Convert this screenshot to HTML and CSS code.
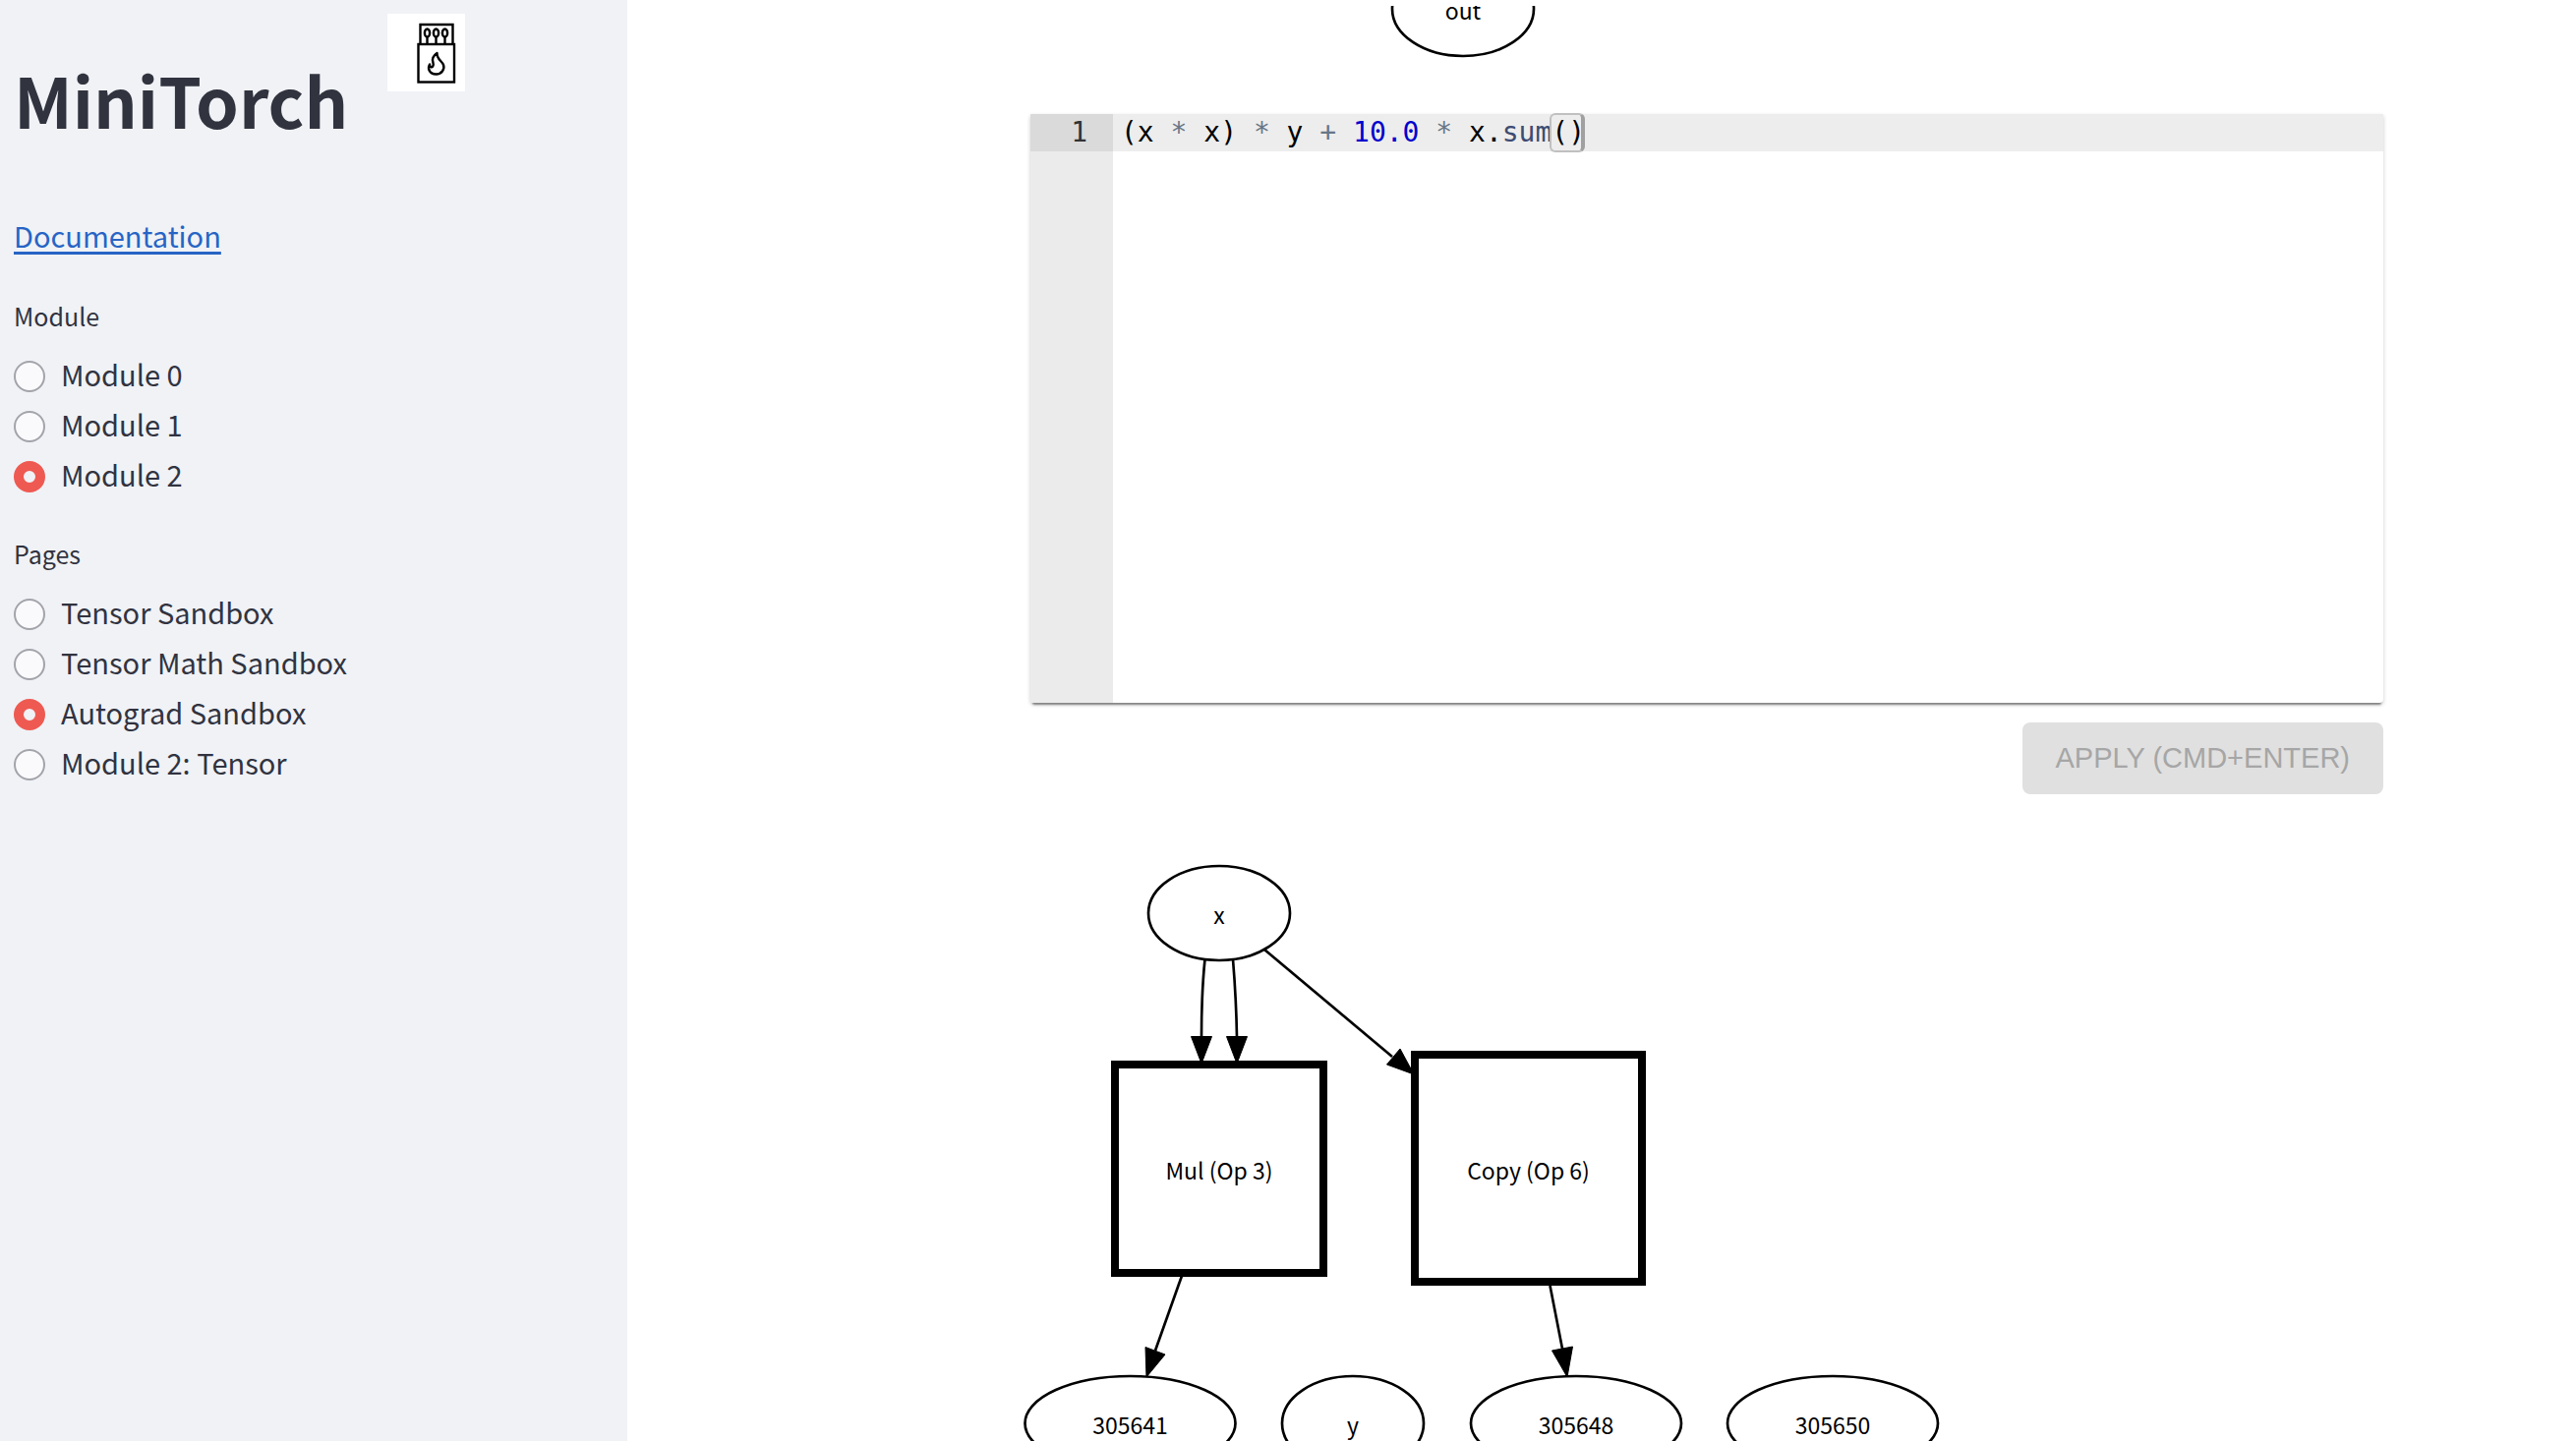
FILE: index.html
```html
<!DOCTYPE html>
<html lang="en">
<head>
<meta charset="utf-8">
<title>MiniTorch</title>
<link rel="stylesheet" href="styles.css">
</head>
<body>
<div class="app">
  <aside class="sidebar">
    <header class="brand">
      <h1 class="brand-title">MiniTorch</h1>
      <svg class="brand-logo" viewBox="0 0 79 79" role="img" aria-label="Matchbox">
        <rect width="79" height="79" fill="#fff"/>
        <g fill="none" stroke="#000" stroke-width="2.400">
          <path d="M33.500 31V11H66.500V31"/>
          <rect x="31.500" y="31" width="36.500" height="38.500"/>
          <ellipse cx="40.500" cy="19.500" rx="2.600" ry="4"/>
          <ellipse cx="49.500" cy="19.500" rx="2.600" ry="4"/>
          <ellipse cx="58.500" cy="19.500" rx="2.600" ry="4"/>
          <path d="M40.500 23.500V31M49.500 23.500V31M58.500 23.500V31"/>
          <path stroke-linejoin="round" d="M50.500 40C46 43 45 46 46.500 50C47.500 53 45.500 55 44 54C43 53.500 43 52 43 51.500C40.500 56 43 61.500 49.500 61.500C55.500 61.500 58.500 56 57 52C55.500 48 50 46 50.500 40Z"/>
        </g>
      </svg>
    </header>
    <a class="doc-link" href="#docs">Documentation</a>
    <fieldset class="radio-group">
      <legend class="radio-legend">Module</legend>
      <label class="radio"><input type="radio" name="module"><span>Module 0</span></label>
      <label class="radio"><input type="radio" name="module"><span>Module 1</span></label>
      <label class="radio"><input type="radio" name="module" checked><span>Module 2</span></label>
    </fieldset>
    <fieldset class="radio-group">
      <legend class="radio-legend">Pages</legend>
      <label class="radio"><input type="radio" name="page"><span>Tensor Sandbox</span></label>
      <label class="radio"><input type="radio" name="page"><span>Tensor Math Sandbox</span></label>
      <label class="radio"><input type="radio" name="page" checked><span>Autograd Sandbox</span></label>
      <label class="radio"><input type="radio" name="page"><span>Module 2: Tensor</span></label>
    </fieldset>
  </aside>
  <main class="content">
    <svg class="graph graph-output" viewBox="0 0 960 54" width="960" height="54">
      <ellipse class="node" cx="448" cy="3" rx="72" ry="48"/>
      <text class="node-text" x="448" y="14">out</text>
    </svg>
    <form class="editor-form">
      <div class="editor">
        <div class="gutter"><div class="gutter-line">1</div></div>
        <div class="code" contenteditable="true" role="textbox" aria-label="Expression" spellcheck="false"><div class="code-line">(x <span class="op">*</span> x) <span class="op">*</span> y <span class="op">+</span> <span class="num">10.0</span> <span class="op">*</span> x.<span class="fn">sum</span><span class="bracket">()</span></div></div>
      </div>
      <button class="apply" type="button" disabled>APPLY (CMD+ENTER)</button>
    </form>
    <svg class="graph graph-flow" viewBox="0 0 960 640" width="960" height="640">
      <g class="node">
        <ellipse cx="200" cy="53" rx="72" ry="48"/>
        <ellipse cx="109.500" cy="572" rx="107" ry="48"/>
        <ellipse cx="336" cy="572" rx="72" ry="48"/>
        <ellipse cx="563" cy="572" rx="107" ry="48"/>
        <ellipse cx="824" cy="572" rx="107" ry="48"/>
      </g>
      <g class="op-node">
        <rect x="94" y="207" width="212" height="212"/>
        <rect x="399" y="197" width="231" height="231"/>
      </g>
      <g class="edge">
        <path d="M185.500 100C183 124 182 150 182 179"/>
        <path d="M214 100C216 124 217.500 150 218 179"/>
        <path d="M246 90L376 199"/>
        <path d="M162 422L135 498"/>
        <path d="M536.500 432L549 496"/>
      </g>
      <g class="arrow">
        <path d="M171.500 178.500H192.500L182 206Z"/>
        <path d="M207.500 178.500H228.500L218 206Z"/>
        <path d="M384 191L370.500 207L398 217Z"/>
        <path d="M125 494.500L145 502L126 525Z"/>
        <path d="M538.500 498L559.500 494L554 525Z"/>
      </g>
      <g class="node-text">
        <text x="200" y="64">x</text>
        <text x="200" y="324">Mul (Op 3)</text>
        <text x="514.500" y="324">Copy (Op 6)</text>
        <text x="109.500" y="583">305641</text>
        <text x="336" y="583">y</text>
        <text x="563" y="583">305648</text>
        <text x="824" y="583">305650</text>
      </g>
    </svg>
  </main>
</div>
</body>
</html>
```
FILE: styles.css
```css
* {
  box-sizing: border-box;
}

body {
  margin: 0;
  background: #fff;
  color: #31333f;
  font-family: "Noto Sans CJK SC", "Open Sans", sans-serif;
  font-size: 29px;
  line-height: 48px;
}

.app {
  display: flex;
  height: 100vh;
  overflow: hidden;
}

/* Sidebar */
.sidebar {
  flex: 0 0 638px;
  padding: 14px;
  background: #f0f2f6;
}

.brand {
  display: grid;
  grid-template-columns: 380px auto;
  justify-content: start;
  align-items: start;
  margin-bottom: 66px;
}

.brand-title {
  margin: 39px 0 0;
  font-size: 70px;
  line-height: 96px;
  font-weight: 700;
}

.brand-logo {
  width: 79px;
  height: 79px;
}

.doc-link {
  display: inline-block;
  color: #2764c5;
  text-decoration-thickness: 3px;
  text-underline-offset: 4px;
}

.radio-group {
  margin: 0 0 32px;
  padding: 0;
  border: 0;
}

.doc-link + .radio-group {
  margin-top: 37px;
}

.radio-legend {
  margin-bottom: 15px;
  padding: 0;
  font-size: 25px;
  line-height: 42px;
}

.radio {
  display: flex;
  align-items: flex-start;
  gap: 16px;
  height: 51px;
  line-height: 46px;
}

.radio input {
  appearance: none;
  width: 32px;
  height: 32px;
  margin: 10px 0 0;
  border: 2px solid #a3a4ab;
  border-radius: 50%;
  background: #fafafc;
}

.radio input:checked {
  border: 10px solid #ee5a52;
  background: #f0f2f6;
}

/* Main column */
.content {
  flex: 1;
  min-width: 0;
  padding: 6px 188px 0 402px;
}

.editor-form {
  display: flex;
  flex-direction: column;
  padding: 56px 8px 68px;
}

.editor {
  display: flex;
  height: 599px;
  border-radius: 0 0 4px 4px;
  background: #fff;
  box-shadow: 0 4px 2px -2px rgba(0, 0, 0, 0.4), 0 2px 4px rgba(0, 0, 0, 0.2);
  color: #000;
  font-family: "DejaVu Sans Mono", monospace;
  font-size: 28px;
  line-height: 38px;
}

.gutter {
  width: 84px;
  background: #ebebeb;
  color: #333;
  text-align: right;
}

.gutter-line {
  padding-right: 26px;
  background: #dadada;
}

.code {
  flex: 1;
  outline: 0;
}

.code-line {
  padding-left: 8px;
  background: #ededed;
  white-space: pre;
}

.op {
  color: #687687;
}

.num {
  color: #0000cd;
}

.fn {
  color: #3c4c72;
}

.bracket {
  position: relative;
}

.bracket::after {
  content: "";
  position: absolute;
  inset: -3px 0 -4px -2px;
  border: 2px solid #c0c0c0;
  border-right: 4px solid #a0a0a0;
  border-radius: 6px;
}

.apply {
  align-self: flex-end;
  height: 73px;
  margin-top: 20px;
  padding: 0 34px;
  border: 0;
  border-radius: 8px;
  background: #e0e0e0;
  color: #a6a6a6;
  font-family: "Liberation Sans", Arial, sans-serif;
  font-size: 29px;
}

/* Graphs */
.graph {
  display: block;
}

.node {
  fill: none;
  stroke: #000;
  stroke-width: 2.67;
}

.op-node {
  fill: none;
  stroke: #000;
  stroke-width: 8;
}

.edge {
  fill: none;
  stroke: #000;
  stroke-width: 2.67;
}

.arrow {
  fill: #000;
  stroke: #000;
}

.node-text {
  fill: #000;
  font-size: 23px;
  text-anchor: middle;
}
```
